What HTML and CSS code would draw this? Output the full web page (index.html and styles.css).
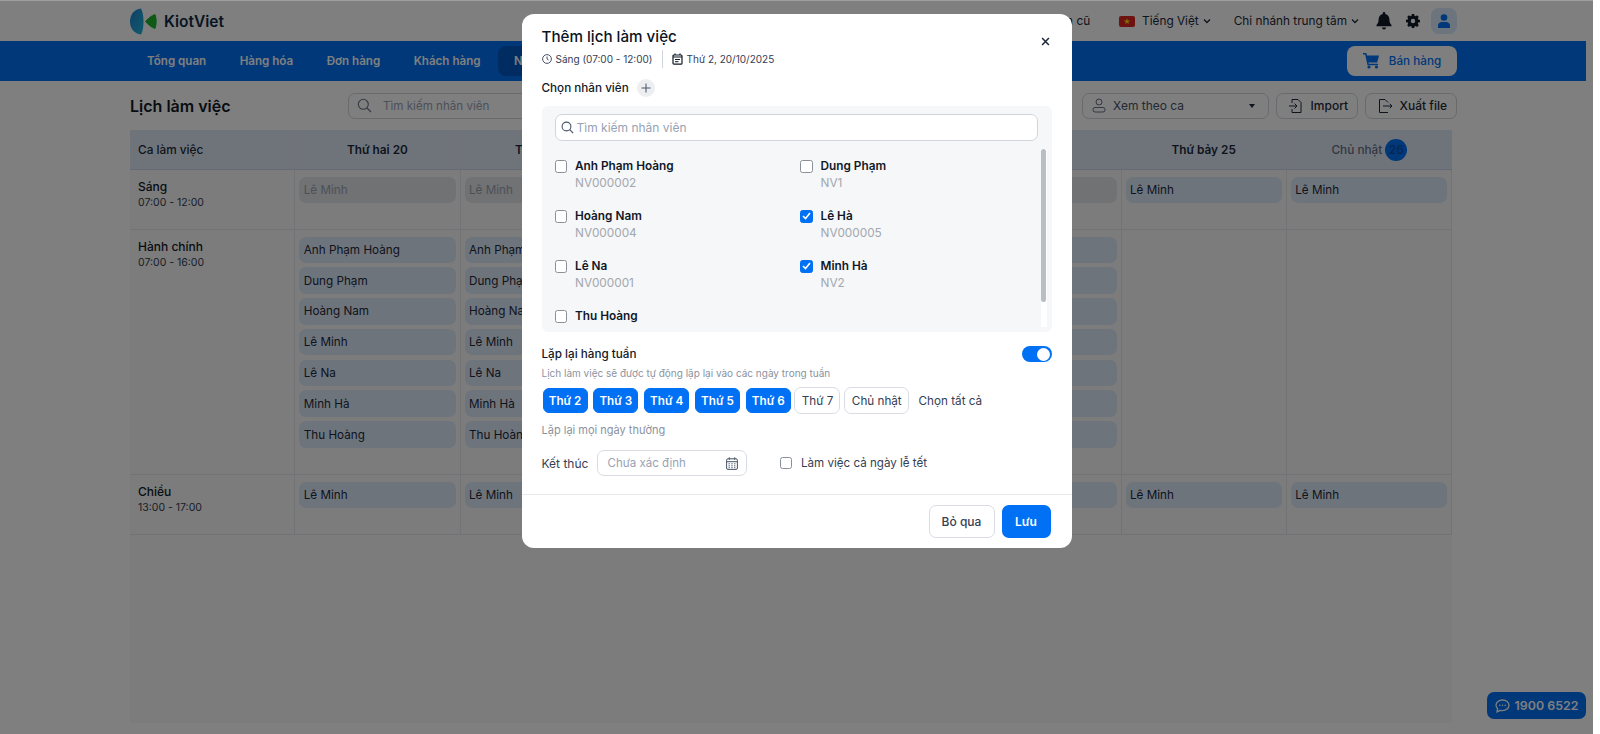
FILE: index.html
```html
<!DOCTYPE html>
<html lang="vi">
<head>
<meta charset="utf-8">
<title>Lịch làm việc</title>
<link rel="stylesheet" href="styles.css">
</head>
<body>
<div class="page">
  <header class="topbar">
    <div class="brand">
      <svg class="logo" width="27" height="27" viewBox="0 0 27 27"><defs><linearGradient id="lens" x1="0" y1="0" x2="1" y2="1"><stop offset="0" stop-color="#1f7fd0"/><stop offset="1" stop-color="#22b6d8"/></linearGradient></defs><path d="M11 0.500C4.500 1 0 6.500 0 13.500S4.500 26 11 26.500C13 23 13.500 18 13.500 13.500S13 4 11 .5Z" fill="url(#lens)"/><path d="M25 6.500C21 8 18 10.500 15.500 13.500C18 16.500 21 19 25 20.500C26.600 16 26.600 11 25 6.500Z" fill="#1fb32f" stroke="#1fb32f" stroke-linejoin="round"/></svg>
      <span class="brand-name">KiotViet</span>
    </div>
    <div class="top-right">
      <span class="top-link old">Giao diện cũ</span>
      <span class="top-link lang"><svg class="flag" width="16" height="11" viewBox="0 0 16 11"><rect width="16" height="11" rx="2" fill="#da251d"/><path d="M8 2.200l.8 2.300h2.400l-2 1.400.8 2.300-2-1.400-2 1.400.8-2.300-2-1.400h2.400z" fill="#ffe000"/></svg>Tiếng Việt<svg class="chev" width="8" height="6" viewBox="0 0 8 6"><path d="M1 1.500l3 3 3-3" fill="none" stroke="#1d2939" stroke-width="1.300"/></svg></span>
      <span class="top-link branch">Chi nhánh trung tâm<svg class="chev" width="8" height="6" viewBox="0 0 8 6"><path d="M1 1.500l3 3 3-3" fill="none" stroke="#1d2939" stroke-width="1.300"/></svg></span>
      <svg class="bell" width="16" height="20" viewBox="0 0 16 20"><path d="M8 1a1.300 1.300 0 0 0-1.300 1.300v.6C4 3.500 2.600 6 2.600 8.600c0 3-1 4.400-2.100 5.500v1.200h15v-1.200c-1.100-1.100-2.100-2.500-2.100-5.500 0-2.600-1.400-5.100-4.100-5.700v-.6A1.300 1.300 0 0 0 8 1zM6 16.500a2 2 0 0 0 4 0z" fill="#111827"/></svg>
      <svg class="gear" width="14" height="14" viewBox="0 0 14 14"><path d="M5.800 0h2.400l.3 1.800 1.100.5 1.500-1 1.700 1.700-1 1.500.5 1.100 1.700.3v2.400l-1.700.3-.5 1.100 1 1.500-1.700 1.700-1.500-1-1.100.5-.3 1.800H5.800l-.3-1.800-1.100-.5-1.500 1L1.200 11.200l1-1.500-.5-1.100L0 8.200V5.800l1.700-.3.5-1.100-1-1.500L2.900 1.200l1.500 1 1.100-.5zM7 4.800a2.200 2.200 0 1 0 0 4.400 2.200 2.200 0 0 0 0-4.400z" fill-rule="evenodd" fill="#111827"/></svg>
      <span class="avatar"><svg width="12" height="14" viewBox="0 0 12 14"><circle cx="6" cy="3.500" r="3.300" fill="#0070f4"/><path d="M0 14v-2.500C0 9.200 2 8 3.800 8h4.400C10 8 12 9.200 12 11.500V14z" fill="#0070f4"/></svg></span>
    </div>
  </header>

  <nav class="mainnav">
    <div class="nav-items">
      <a class="nav-item">Tổng quan</a>
      <a class="nav-item">Hàng hóa</a>
      <a class="nav-item">Đơn hàng</a>
      <a class="nav-item">Khách hàng</a>
      <a class="nav-item active">Nhân viên</a>
      <a class="nav-item">Sổ quỹ</a>
      <a class="nav-item">Báo cáo</a>
    </div>
    <button class="sell"><svg width="17" height="16" viewBox="0 0 17 16"><path d="M3 2.500h13l-1.800 7H4.800z" fill="#0070f4"/><path d="M0 .8h2.800l2.300 10.700h10" fill="none" stroke="#0070f4" stroke-width="1.500"/><circle cx="6" cy="14" r="1.600" fill="#0070f4"/><circle cx="13.500" cy="14" r="1.600" fill="#0070f4"/></svg>Bán hàng</button>
  </nav>

  <main class="content">
    <div class="toolbar">
      <h1 class="page-title">Lịch làm việc</h1>
      <div class="page-search"><svg width="15" height="15" viewBox="0 0 15 15"><circle cx="6.300" cy="6.300" r="5" fill="none" stroke="#667085" stroke-width="1.100"/><path d="M10 10l4 4" stroke="#667085" stroke-width="1.100"/></svg><span>Tìm kiếm nhân viên</span></div>
      <div class="toolbar-right">
        <div class="view-select"><svg width="14" height="15" viewBox="0 0 14 15"><circle cx="7" cy="4" r="3" fill="none" stroke="#667085"/><rect x="1" y="9.500" width="12" height="4.500" rx="2" fill="none" stroke="#667085"/></svg><span>Xem theo ca</span><i class="caret"></i></div>
        <button class="tool-btn"><svg width="16" height="16" viewBox="0 0 16 16" fill="none" stroke="#1d2939"><path d="M4 5V1.500h6l3 3V14.500H4V11"/><path d="M1 8h8M6.500 5.500L9 8l-2.500 2.500"/></svg>Import</button>
        <button class="tool-btn"><svg width="16" height="16" viewBox="0 0 16 16" fill="none" stroke="#1d2939"><path d="M11 4.500l-3-3H2.500v13H11"/><path d="M6 8h9M12.800 5.800L15 8l-2.200 2.200"/></svg>Xuất file</button>
      </div>
    </div>

    <section class="schedule">
      <div class="cell head first">Ca làm việc</div>
      <div class="cell head">Thứ hai 20</div>
      <div class="cell head">Thứ ba 21</div>
      <div class="cell head">Thứ tư 22</div>
      <div class="cell head">Thứ năm 23</div>
      <div class="cell head">Thứ sáu 24</div>
      <div class="cell head">Thứ bảy 25</div>
      <div class="cell head sunday">Chủ nhật <b class="today">26</b></div>

      <div class="cell shift"><strong>Sáng</strong><small>07:00 - 12:00</small></div>
      <div class="cell"><span class="chip past">Lê Minh</span></div>
      <div class="cell"><span class="chip past">Lê Minh</span></div>
      <div class="cell"><span class="chip past">Lê Minh</span></div>
      <div class="cell"><span class="chip past">Lê Minh</span></div>
      <div class="cell"><span class="chip past">Lê Minh</span></div>
      <div class="cell"><span class="chip">Lê Minh</span></div>
      <div class="cell"><span class="chip">Lê Minh</span></div>

      <div class="cell shift"><strong>Hành chính</strong><small>07:00 - 16:00</small></div>
      <div class="cell"><span class="chip">Anh Phạm Hoàng</span><span class="chip">Dung Phạm</span><span class="chip">Hoàng Nam</span><span class="chip">Lê Minh</span><span class="chip">Lê Na</span><span class="chip">Minh Hà</span><span class="chip">Thu Hoàng</span></div>
      <div class="cell"><span class="chip">Anh Phạm Hoàng</span><span class="chip">Dung Phạm</span><span class="chip">Hoàng Nam</span><span class="chip">Lê Minh</span><span class="chip">Lê Na</span><span class="chip">Minh Hà</span><span class="chip">Thu Hoàng</span></div>
      <div class="cell"><span class="chip">Anh Phạm Hoàng</span><span class="chip">Dung Phạm</span><span class="chip">Hoàng Nam</span><span class="chip">Lê Minh</span><span class="chip">Lê Na</span><span class="chip">Minh Hà</span><span class="chip">Thu Hoàng</span></div>
      <div class="cell"><span class="chip">Anh Phạm Hoàng</span><span class="chip">Dung Phạm</span><span class="chip">Hoàng Nam</span><span class="chip">Lê Minh</span><span class="chip">Lê Na</span><span class="chip">Minh Hà</span><span class="chip">Thu Hoàng</span></div>
      <div class="cell"><span class="chip">Anh Phạm Hoàng</span><span class="chip">Dung Phạm</span><span class="chip">Hoàng Nam</span><span class="chip">Lê Minh</span><span class="chip">Lê Na</span><span class="chip">Minh Hà</span><span class="chip">Thu Hoàng</span></div>
      <div class="cell"></div>
      <div class="cell"></div>

      <div class="cell shift"><strong>Chiều</strong><small>13:00 - 17:00</small></div>
      <div class="cell"><span class="chip">Lê Minh</span></div>
      <div class="cell"><span class="chip">Lê Minh</span></div>
      <div class="cell"><span class="chip">Lê Minh</span></div>
      <div class="cell"><span class="chip">Lê Minh</span></div>
      <div class="cell"><span class="chip">Lê Minh</span></div>
      <div class="cell"><span class="chip">Lê Minh</span></div>
      <div class="cell"><span class="chip">Lê Minh</span></div>
    </section>
  </main>

  <a class="hotline"><svg width="15" height="14" viewBox="0 0 15 14"><path d="M7.500 1C3.900 1 1 3.300 1 6.200c0 1.300.6 2.500 1.600 3.400L2 12.800l3.300-1.500c.7.200 1.400.3 2.200.3 3.600 0 6.500-2.400 6.500-5.400S11.100 1 7.500 1z" fill="none" stroke="#fff" stroke-width="1.300"/><circle cx="4.800" cy="6.300" r=".8" fill="#fff"/><circle cx="7.500" cy="6.300" r=".8" fill="#fff"/><circle cx="10.200" cy="6.300" r=".8" fill="#fff"/></svg>1900 6522</a>
</div>

<div class="overlay"></div>

<div class="modal">
  <div class="modal-body">
    <button class="close"><svg width="9" height="9" viewBox="0 0 10 10"><path d="M1.200 1.200l7.600 7.600M8.800 1.200L1.200 8.800" stroke="#1d2939" stroke-width="1.700"/></svg></button>
    <h2 class="modal-title">Thêm lịch làm việc</h2>
    <div class="meta">
      <span class="meta-item"><svg width="10" height="10" viewBox="0 0 10 10" fill="none" stroke="#344054" stroke-width=".9"><circle cx="5" cy="5" r="4.400"/><path d="M5 2.500V5l1.600 1"/></svg>Sáng (07:00 - 12:00)</span>
      <span class="meta-sep"></span>
      <span class="meta-item"><svg width="11" height="12" viewBox="0 0 11 12" fill="none" stroke="#111827" stroke-width="1.200"><rect x="1" y="2" width="9" height="9.200" rx="1"/><path d="M1 4h9M3 .5V2M8 .5V2"/><path d="M3 6.500h5M3 8.700h3.500" stroke-width="1"/></svg>Thứ 2, 20/10/2025</span>
    </div>

    <div class="pick-label"><span>Chọn nhân viên</span><button class="add"><svg width="10" height="10" viewBox="0 0 10 10"><path d="M5 .5v9M.5 5h9" stroke="#475467" stroke-width="1"/></svg></button></div>

    <div class="picker">
      <div class="picker-search"><svg width="13" height="13" viewBox="0 0 13 13"><circle cx="5.500" cy="5.500" r="4.400" fill="none" stroke="#475467" stroke-width="1.100"/><path d="M8.700 8.700l3.500 3.500" stroke="#475467" stroke-width="1.200"/></svg><span>Tìm kiếm nhân viên</span></div>
      <div class="picker-scroll">
        <div class="staff-grid">
          <label class="staff"><i class="check"></i><span><b>Anh Phạm Hoàng</b><em>NV000002</em></span></label>
          <label class="staff"><i class="check"></i><span><b>Dung Phạm</b><em>NV1</em></span></label>
          <label class="staff"><i class="check"></i><span><b>Hoàng Nam</b><em>NV000004</em></span></label>
          <label class="staff"><i class="check on"><svg width="9" height="8" viewBox="0 0 9 8"><path d="M1 4l2.500 2.500L8 1" fill="none" stroke="#fff" stroke-width="1.600"/></svg></i><span><b>Lê Hà</b><em>NV000005</em></span></label>
          <label class="staff"><i class="check"></i><span><b>Lê Na</b><em>NV000001</em></span></label>
          <label class="staff"><i class="check on"><svg width="9" height="8" viewBox="0 0 9 8"><path d="M1 4l2.500 2.500L8 1" fill="none" stroke="#fff" stroke-width="1.600"/></svg></i><span><b>Minh Hà</b><em>NV2</em></span></label>
          <label class="staff"><i class="check"></i><span><b>Thu Hoàng</b></span></label>
        </div>
        <div class="scrollbar"><div class="thumb"></div></div>
      </div>
    </div>

    <div class="repeat-head"><strong>Lặp lại hàng tuần</strong><span class="toggle"><i></i></span></div>
    <p class="hint">Lịch làm việc sẽ được tự động lặp lại vào các ngày trong tuần</p>
    <div class="days">
      <button class="day on">Thứ 2</button>
      <button class="day on">Thứ 3</button>
      <button class="day on">Thứ 4</button>
      <button class="day on">Thứ 5</button>
      <button class="day on">Thứ 6</button>
      <button class="day">Thứ 7</button>
      <button class="day wide">Chủ nhật</button>
      <span class="all">Chọn tất cả</span>
    </div>
    <p class="note">Lặp lại mọi ngày thường</p>
    <div class="end-row">
      <span class="end-label">Kết thúc</span>
      <div class="date"><span>Chưa xác định</span><svg width="12" height="13" viewBox="0 0 12 13" fill="none" stroke="#475467"><rect x=".6" y="1.800" width="10.800" height="10.600" rx="1.400"/><path d="M.6 4.700h10.800M3.300.3v2.500M8.700.3v2.500" /><path d="M2.500 6.800h7M2.500 8.800h7M2.500 10.700h7" stroke-dasharray="1.300 1.500"/></svg></div>
      <label class="holiday"><i class="check"></i>Làm việc cả ngày lễ tết</label>
    </div>
  </div>
  <div class="modal-foot">
    <button class="btn ghost">Bỏ qua</button>
    <button class="btn primary">Lưu</button>
  </div>
</div>
</body>
</html>
```
FILE: styles.css
```css
* { box-sizing: border-box; }
html, body { margin: 0; padding: 0; height: 100%; background: #fff; }
body { font-family: Inter, "Noto Sans", sans-serif; color: #111827; overflow: hidden; }
button { font-family: inherit; cursor: pointer; }
h1, h2, p { margin: 0; }

.page { width: 1586px; height: 734px; background: #fff; position: relative; padding-top: 1px; }

.topbar { height: 40px; padding: 0 129px 0 130px; display: flex; align-items: center; justify-content: space-between; }
.brand { display: flex; align-items: center; gap: 7px; }
.logo { display: block; }
.brand-name { font-size: 15.500px; font-weight: 600; color: #0f2a47; }
.top-right { display: flex; align-items: center; font-size: 11.800px; color: #1d2939; }
.top-link { display: flex; align-items: center; }
.old { margin-right: 29px; }
.flag { margin-right: 7px; }
.chev { margin-left: 4px; }
.branch { margin-left: 23px; }
.bell { margin-left: 17px; }
.gear { margin-left: 14px; }
.avatar { margin-left: 11px; width: 26px; height: 26px; border-radius: 8px; background: #d9e8fb; display: flex; align-items: center; justify-content: center; }

.mainnav { height: 40px; background: #0070f4; padding: 0 129px 0 147px; display: flex; align-items: center; justify-content: space-between; }
.nav-items { display: flex; align-items: center; }
.nav-item { font-size: 11.600px; font-weight: 600; color: #fff; margin-right: 33.500px; white-space: nowrap; }
.nav-item.active { background: #0058c4; border-radius: 8px; padding: 8px 16px; margin-left: -16px; margin-right: 17px; }
.sell { width: 110px; height: 30px; border: 0; border-radius: 8px; background: #fff; color: #0070f4; font-size: 11.700px; font-weight: 500; display: flex; align-items: center; justify-content: center; gap: 9px; }

.content { padding: 0 0 0 130px; background: #fff; }
.toolbar { display: flex; align-items: center; height: 49px; width: 1327px; }
.page-title { font-size: 16px; font-weight: 600; width: 218px; color: #111827; }
.page-search { width: 300px; height: 26px; border: 1px solid #d0d5dd; border-radius: 7px; padding: 0 8px; display: flex; align-items: center; gap: 11px; font-size: 11.600px; color: #98a2b3; }
.toolbar-right { margin-left: auto; display: flex; gap: 6.500px; }
.view-select { width: 187px; height: 26px; border: 1px solid #d0d5dd; border-radius: 7px; padding: 0 9px; display: flex; align-items: center; gap: 7px; font-size: 12px; color: #475467; }
.caret { margin-left: auto; margin-right: 4px; width: 0; height: 0; border-left: 3px solid transparent; border-right: 3px solid transparent; border-top: 4px solid #1d2939; }
.tool-btn { height: 26px; padding: 0 9px 0 11px; border: 1px solid #d0d5dd; border-radius: 7px; background: #fff; color: #1d2939; font-size: 12px; font-weight: 500; display: flex; align-items: center; gap: 7px; }

.schedule { width: 1322px; height: 593px; display: grid; grid-template-columns: repeat(8, 1fr); grid-template-rows: 40px 60px 245px 60px; align-content: start; background: #f8f9f9; }
.cell { padding: 6.500px 4px 0; border-right: 1px solid #e4e7ec; border-bottom: 1px solid #e4e7ec; min-width: 0; display: flex; flex-direction: column; gap: 4.300px; }
.cell.head { background: #dfe8f6; border-bottom: 1px solid #c9d6ea; padding: 0; align-items: center; justify-content: center; flex-direction: row; font-size: 11.800px; font-weight: 600; color: #1d2939; gap: 3px; }
.cell.head.first { justify-content: flex-start; padding-left: 8px; font-weight: 500; }
.cell.head.sunday { color: #667085; font-weight: 500; border-right: 0; }
.today { width: 22px; height: 22px; border-radius: 50%; background: #0070f4; color: #0b4fa8; display: flex; align-items: center; justify-content: center; font-size: 12px; font-weight: 500; }
.cell.shift { padding: 9px 8px 0; gap: 2px; }
.shift strong { font-size: 12px; font-weight: 500; color: #111827; }
.shift small { font-size: 10.500px; color: #344054; }
.chip { height: 26.500px; flex: none; background: #dde8f8; border-radius: 7px; padding: 0 4.500px; font-size: 11.700px; color: #1d2939; display: flex; align-items: center; white-space: nowrap; overflow: hidden; }
.chip.past { background: #e2e4e7; color: #98a2b3; }

.hotline { position: absolute; right: 0; bottom: 15px; width: 99px; height: 27px; background: #0070f4; border-radius: 7px; color: #fff; font-size: 12.400px; font-weight: 600; display: flex; align-items: center; justify-content: center; gap: 5px; }

.overlay { position: fixed; left: 0; top: 0; width: 1593px; height: 734px; background: rgba(0, 0, 0, .5); border-top: 1px solid rgba(255,255,255,.25); }

.modal { position: fixed; left: 521.500px; top: 14px; width: 550px; height: 534px; background: #fff; border-radius: 12px; display: flex; flex-direction: column; }
.modal-body { position: relative; padding: 15px 20px 0; flex: 1; }
.close { position: absolute; top: 23px; right: 22px; padding: 0; border: 0; background: none; display: flex; }
.modal-title { font-size: 15.200px; font-weight: 500; line-height: 16px; color: #0b1220; }
.meta { margin-top: 4px; display: flex; align-items: center; height: 20px; font-size: 10px; color: #344054; }
.meta-item { display: flex; align-items: center; gap: 4px; }
.meta-sep { width: 1px; height: 18px; background: #d0d5dd; margin: 0 9px; }
.pick-label { margin-top: 10px; display: flex; align-items: center; gap: 8px; font-size: 11.700px; font-weight: 500; height: 18px; color: #111827; }
.add { width: 18px; height: 18px; padding: 0; border: 0; border-radius: 50%; background: #eceef0; display: flex; align-items: center; justify-content: center; }

.picker { margin-top: 9px; height: 226px; background: #f6f7f9; border-radius: 6px; padding: 8px 13px 0; overflow: hidden; }
.picker-search { height: 27px; width: 483px; background: #fff; border: 1px solid #d0d5dd; border-radius: 7px; padding: 0 5px; display: flex; align-items: center; gap: 3px; font-size: 12px; color: #98a2b3; }
.picker-scroll { margin-top: 8px; height: 183px; overflow: hidden; position: relative; width: 497px; }
.staff-grid { display: grid; grid-template-columns: 245.500px 230px; grid-auto-rows: 50px; padding-top: 10px; }
.staff { display: flex; gap: 8px; }
.check { display: flex; align-items: center; justify-content: center; flex: none; width: 12.500px; height: 12.500px; margin-top: 1px; background: #fff; border: 1px solid #8a8f98; border-radius: 2.500px; }
.check.on { background: #0070f4; border-color: #0070f4; }
.staff span { display: flex; flex-direction: column; gap: 2px; }
.staff b { font-size: 11.800px; font-weight: 600; line-height: 15px; color: #111827; }
.staff em { font-style: normal; font-size: 11.800px; line-height: 15px; color: #a3a7ae; }
.scrollbar { position: absolute; right: 5px; top: 0; width: 6px; height: 178px; background: #fff; }
.thumb { width: 5px; height: 153px; background: #b9bdc4; border-radius: 3px; }

.repeat-head { margin-top: 14px; height: 16px; display: flex; align-items: center; justify-content: space-between; font-size: 11.700px; }
.repeat-head strong { font-weight: 500; color: #111827; }
.toggle { width: 30px; height: 16px; border-radius: 8px; background: #0070f4; display: flex; align-items: center; justify-content: flex-end; padding-right: 1.500px; }
.toggle i { width: 13px; height: 13px; background: #fff; border-radius: 50%; }
.hint { margin-top: 4px; font-size: 10px; line-height: 14px; color: #8b93a1; }
.days { margin-top: 7px; height: 27px; padding-left: 1px; display: flex; align-items: center; gap: 5.800px; }
.day { height: 27px; width: 46px; padding: 0; margin-left: -2px; border: 1px solid #d9dde3; border-radius: 7px; background: #fff; font-size: 11.700px; color: #344054; white-space: nowrap; }
.day.wide { width: 65px; }
.day.on { height: 25px; width: 45px; margin-left: 0; border-radius: 6px; background: #0070f4; border-color: #0070f4; color: #fff; font-weight: 600; }
.all { margin-left: 3.500px; font-size: 11.700px; color: #344054; }
.note { margin-top: 9px; font-size: 11px; line-height: 15px; color: #8b93a1; }
.end-row { margin-top: 12px; display: flex; align-items: center; font-size: 12px; color: #344054; }
.end-label { width: 55px; }
.date { width: 150px; height: 26px; border: 1px solid #d9dde3; border-radius: 7px; padding: 0 8px 0 10px; display: flex; align-items: center; justify-content: space-between; color: #98a2b3; font-size: 11.500px; }
.holiday { margin-left: 33px; display: flex; align-items: center; gap: 9px; font-size: 11.600px; }
.holiday .check { margin-top: 0; }

.modal-foot { height: 54px; border-top: 1px solid #e7e9ed; padding: 10px 21px 0 20px; display: flex; justify-content: flex-end; gap: 7px; }
.btn { height: 33px; border-radius: 7px; font-size: 12px; font-weight: 500; }
.btn.ghost { width: 66px; background: #fff; border: 1px solid #d9dde3; color: #344054; }
.btn.primary { width: 49px; background: #0070f4; border: 0; color: #fff; font-weight: 600; }
```
